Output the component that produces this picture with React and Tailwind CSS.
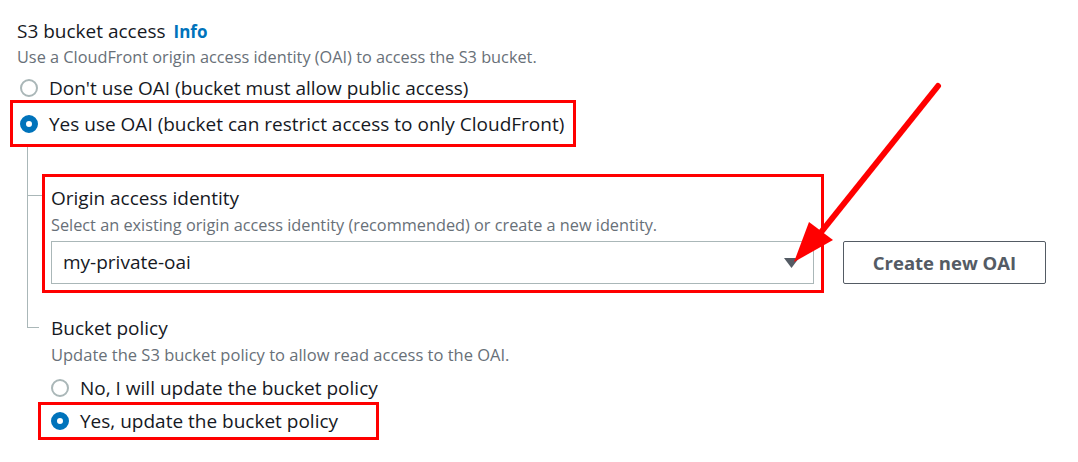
import React from "react";

function Radio({ checked }) {
  return checked ? (
    <span className="inline-block w-[18px] h-[18px] rounded-full border-[6px] border-[#0073bb] bg-white shrink-0" />
  ) : (
    <span className="inline-block w-[18px] h-[18px] rounded-full border-2 border-[#aab7b8] bg-white shrink-0" />
  );
}

export default function App() {
  return (
    <div className="relative w-[1078px] h-[462px] bg-white text-[#16191f] overflow-hidden font-['Open_Sans',sans-serif]">
      <div className="pl-[17px] pt-[18px]">
        <div className="flex items-baseline gap-[8px] h-[26px]">
          <span className="text-[19px] leading-[26px]">S3 bucket access</span>
          <span className="text-[17px] font-bold text-[#0073bb]">Info</span>
        </div>
        <div className="text-[16.3px] leading-[22px] text-[#687078] mt-[2px]">
          Use a CloudFront origin access identity (OAI) to access the S3 bucket.
        </div>
        <div className="flex items-center gap-[11px] mt-[8px] pl-[3px] h-[24px]">
          <Radio />
          <span className="text-[19px] leading-[24px]">Don't use OAI (bucket must allow public access)</span>
        </div>
        <div className="-ml-[7px] w-[566px] h-[47px] border-[3px] border-[#f00] flex items-center gap-[11px] pl-[7px]">
          <Radio checked />
          <span className="text-[19px] leading-[24px]">Yes use OAI (bucket can restrict access to only CloudFront)</span>
        </div>
      </div>

      <div className="ml-[27px] flex">
        <div className="flex flex-col w-[15px]">
          <div className="w-px h-[48px] bg-[#aab7b8]" />
          <div className="w-[15px] h-px bg-[#aab7b8]" />
          <div className="w-px h-[131px] bg-[#aab7b8]" />
          <div className="w-[12px] h-px bg-[#aab7b8]" />
        </div>
        <div className="flex flex-col">
          <div className="flex items-start mt-[27px]">
            <div className="w-[782px] h-[119px] border-[3px] border-[#f00] pl-[6px] pt-[9px]">
              <div className="text-[19px] leading-[24px]">Origin access identity</div>
              <div className="text-[16.3px] leading-[22px] text-[#687078] mt-[4px]">
                Select an existing origin access identity (recommended) or create a new identity.
              </div>
              <div className="mt-[5px] w-[763px] h-[43px] border border-[#aab7b8] flex items-center justify-between pl-[11px] pr-[14px]">
                <span className="text-[19px]">my-private-oai</span>
                <svg width="15" height="10" viewBox="0 0 15 10">
                  <path d="M0 0 L15 0 L7.5 10 Z" fill="#545b64" />
                </svg>
              </div>
            </div>
            <button className="ml-[19px] mt-[67px] w-[203px] h-[43px] border border-[#545b64] rounded-[2px] text-[18.5px] font-bold text-[#545b64]">
              Create new OAI
            </button>
          </div>
          <div className="ml-[9px] mt-[23px]">
            <div className="text-[19px] leading-[24px]">Bucket policy</div>
            <div className="text-[16.5px] leading-[22px] text-[#687078] mt-[4px]">
              Update the S3 bucket policy to allow read access to the OAI.
            </div>
            <div className="flex items-center gap-[11px] mt-[10px] h-[24px]">
              <Radio />
              <span className="text-[19px] leading-[24px]">No, I will update the bucket policy</span>
            </div>
            <div className="-ml-[13px] mt-[2px] w-[341px] h-[38px] border-[3px] border-[#f00] flex items-center gap-[11px] pl-[10px]">
              <Radio checked />
              <span className="text-[19px] leading-[24px]">Yes, update the bucket policy</span>
            </div>
          </div>
        </div>
      </div>

      <svg className="absolute left-0 top-0 pointer-events-none" width="1078" height="462">
        <line x1="938" y1="86" x2="818" y2="236" stroke="#f00" strokeWidth="6" strokeLinecap="round" />
        <path d="M794 262 L809 222 L833 240 Z" fill="#f00" />
      </svg>
    </div>
  );
}
